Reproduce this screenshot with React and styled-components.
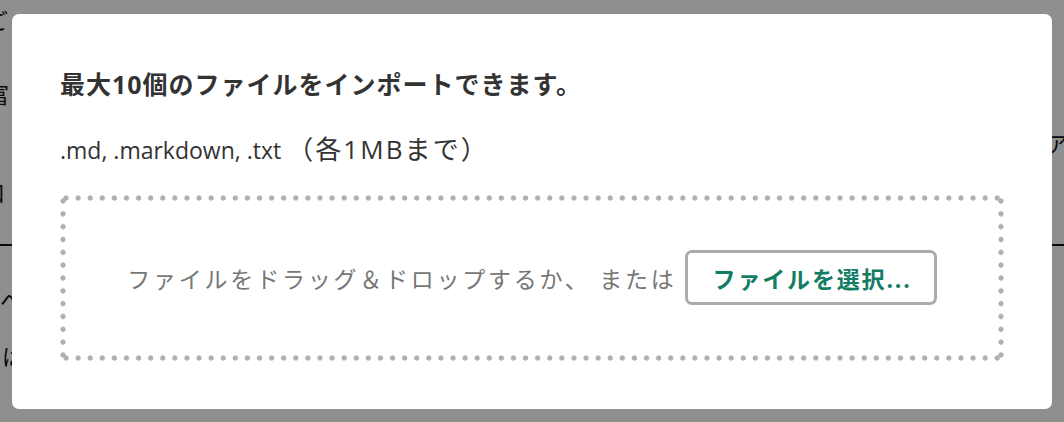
import React from "react";
import styled, { createGlobalStyle } from "styled-components";

const GlobalStyle = createGlobalStyle`
  html, body {
    margin: 0;
    padding: 0;
    background: #fff;
  }
  body {
    font-family: "Open Sans", "Noto Sans CJK JP", sans-serif;
    color: #333;
    overflow: hidden;
  }
`;

// page under the dialog (only a sliver of it shows at the edges)
const Page = styled.div`
  height: 422px;
  position: relative;
  overflow: hidden;
  padding-top: 6px;
  box-sizing: border-box;
`;

const PageLine = styled.p`
  margin: ${(p) => p.$top}px 0 0 ${(p) => p.$indent}px;
  font-size: 22px;
  line-height: 28px;
  color: #111;
  white-space: nowrap;
`;

const PageRule = styled.hr`
  margin: ${(p) => p.$top}px 0 0;
  border: 0;
  border-top: 2px solid #111;
`;

const SideNote = styled.span`
  position: absolute;
  top: 126px;
  left: 1046px;
  font-size: 22px;
  color: #111;
`;

const Overlay = styled.div`
  position: fixed;
  inset: 0;
  background: rgba(0, 0, 0, 0.44);
  display: flex;
  align-items: center;
  justify-content: center;
  padding: 0 12px;
`;

const Modal = styled.div`
  width: 100%;
  background: #fff;
  border-radius: 7px;
  padding: 48px;
  box-sizing: border-box;
  display: flex;
  flex-direction: column;
`;

const Title = styled.h2`
  margin: 0;
  font-size: 25px;
  line-height: 44px;
  font-weight: 700;
  letter-spacing: 0.04em;
  color: #333;
`;

const Formats = styled.p`
  margin: 27px 0 0;
  font-size: 23px;
  line-height: 32px;
  color: #333;
`;

const Limit = styled.span`
  font-size: 26px;
  letter-spacing: 0.08em;
`;

const dot = "radial-gradient(circle, #b0b0b0 2.3px, transparent 3px)";

const DropZone = styled.div`
  margin-top: 29px;
  height: 166px;
  display: flex;
  align-items: center;
  justify-content: center;
  gap: 8px;
  background-image: ${dot}, ${dot}, ${dot}, ${dot};
  background-size: 12px 6px, 12px 6px, 6px 12px, 6px 12px;
  background-position: left top, left bottom, left top, right top;
  background-repeat: space no-repeat, space no-repeat, no-repeat space,
    no-repeat space;
`;

const DropText = styled.span`
  font-size: 23px;
  letter-spacing: 0.12em;
  color: #777;
`;

const PickButton = styled.button`
  height: 55px;
  padding: 0 22px 0 25px;
  border: 3px solid #ababab;
  border-radius: 7px;
  background: #fff;
  font-family: inherit;
  font-size: 23px;
  font-weight: 700;
  letter-spacing: 0.08em;
  color: #137d64;
  cursor: pointer;
`;

export default function App() {
  return (
    <>
      <GlobalStyle />
      <Page>
        <PageLine $top={0} $indent={-14}>ご</PageLine>
        <PageLine $top={46} $indent={-13}>富</PageLine>
        <PageLine $top={70} $indent={-17}>口</PageLine>
        <PageRule $top={38} />
        <PageLine $top={40} $indent={0}>へ</PageLine>
        <PageLine $top={28} $indent={2}>は</PageLine>
        <SideNote>ア</SideNote>
      </Page>
      <Overlay>
        <Modal>
          <Title>最大10個のファイルをインポートできます。</Title>
          <Formats>
            .md, .markdown, .txt <Limit>（各1MBまで）</Limit>
          </Formats>
          <DropZone>
            <DropText>ファイルをドラッグ＆ドロップするか、 または</DropText>
            <PickButton type="button">ファイルを選択...</PickButton>
          </DropZone>
        </Modal>
      </Overlay>
    </>
  );
}
